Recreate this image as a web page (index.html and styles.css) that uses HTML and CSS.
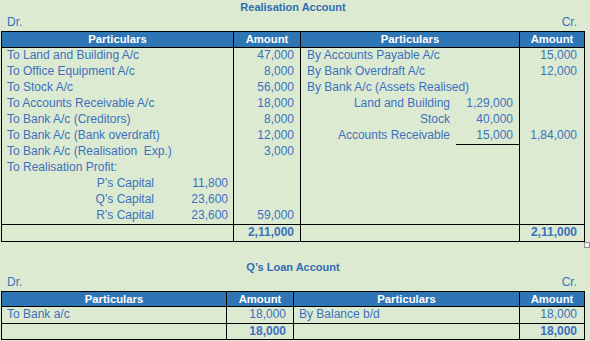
FILE: index.html
```html
<!DOCTYPE html>
<html lang="en">
<head>
<meta charset="utf-8">
<title>Realisation Account</title>
<link rel="stylesheet" href="styles.css">
</head>
<body>
<section class="account">
  <div class="title">Realisation Account</div>
  <div class="drcr"><span>Dr.</span><span>Cr.</span></div>
  <div class="table-wrap">
    <table class="ledger real">
      <thead>
        <tr><th class="c1">Particulars</th><th class="c2">Amount</th><th class="c3">Particulars</th><th class="c4">Amount</th></tr>
      </thead>
      <tbody>
        <tr><td class="txt">To Land and Building A/c</td><td class="num">47,000</td><td class="txt r">By Accounts Payable A/c</td><td class="num r">15,000</td></tr>
        <tr><td class="txt">To Office Equipment A/c</td><td class="num">8,000</td><td class="txt r">By Bank Overdraft A/c</td><td class="num r">12,000</td></tr>
        <tr><td class="txt">To Stock A/c</td><td class="num">56,000</td><td class="txt r">By Bank A/c (Assets Realised)</td><td class="num r"></td></tr>
        <tr><td class="txt">To Accounts Receivable A/c</td><td class="num">18,000</td><td class="split"><div class="sub right"><span class="sub-label">Land and Building</span><span class="sub-amt">1,29,000</span></div></td><td class="num r"></td></tr>
        <tr><td class="txt">To Bank A/c (Creditors)</td><td class="num">8,000</td><td class="split"><div class="sub right"><span class="sub-label">Stock</span><span class="sub-amt">40,000</span></div></td><td class="num r"></td></tr>
        <tr><td class="txt">To Bank A/c (Bank overdraft)</td><td class="num">12,000</td><td class="split"><div class="sub right"><span class="sub-label">Accounts Receivable</span><span class="sub-amt ul">15,000</span></div></td><td class="num r">1,84,000</td></tr>
        <tr><td class="txt">To Bank A/c (Realisation&nbsp; Exp.)</td><td class="num">3,000</td><td class="txt r"></td><td class="num r"></td></tr>
        <tr><td class="txt">To Realisation Profit:</td><td class="num"></td><td class="txt r"></td><td class="num r"></td></tr>
        <tr><td class="split"><div class="sub left"><span class="sub-label">P’s Capital</span><span class="sub-amt">11,800</span></div></td><td class="num"></td><td class="txt r"></td><td class="num r"></td></tr>
        <tr><td class="split"><div class="sub left"><span class="sub-label">Q’s Capital</span><span class="sub-amt">23,600</span></div></td><td class="num"></td><td class="txt r"></td><td class="num r"></td></tr>
        <tr><td class="split"><div class="sub left"><span class="sub-label">R’s Capital</span><span class="sub-amt">23,600</span></div></td><td class="num">59,000</td><td class="txt r"></td><td class="num r"></td></tr>
      </tbody>
      <tfoot>
        <tr class="total"><td></td><td class="num">2,11,000</td><td></td><td class="num r">2,11,000</td></tr>
      </tfoot>
    </table>
    <span class="handle"></span>
  </div>
</section>

<section class="account loan">
  <div class="title">Q’s Loan Account</div>
  <div class="drcr"><span>Dr.</span><span>Cr.</span></div>
  <div class="table-wrap">
    <table class="ledger qloan">
      <thead>
        <tr><th class="q1">Particulars</th><th class="q2">Amount</th><th class="q3">Particulars</th><th class="q4">Amount</th></tr>
      </thead>
      <tbody>
        <tr><td class="txt">To Bank a/c</td><td class="num qn">18,000</td><td class="txt qr">By Balance b/d</td><td class="num r">18,000</td></tr>
      </tbody>
      <tfoot>
        <tr class="total"><td></td><td class="num qn">18,000</td><td></td><td class="num r">18,000</td></tr>
      </tfoot>
    </table>
  </div>
</section>
</body>
</html>
```

FILE: styles.css
```css
html, body {
  margin: 0;
  padding: 0;
  background: #dcead2;
}
body {
  width: 590px;
  height: 341px;
  overflow: hidden;
  font-family: "Liberation Sans", Arial, sans-serif;
  color: #3c70be;
}
.account {
  width: 584px;
  margin-left: 1px;
}
.loan {
  margin-top: 18px;
}
.title {
  text-align: center;
  font-weight: bold;
  font-size: 11px;
  line-height: 14px;
  color: #2f6db3;
}
.drcr {
  display: flex;
  justify-content: space-between;
  font-size: 12px;
  line-height: 17px;
  padding: 0 8px 0 6px;
}
.table-wrap {
  position: relative;
}
.ledger {
  width: 584px;
  table-layout: fixed;
  border-collapse: separate;
  border-spacing: 0;
  border: 1px solid #000;
  font-size: 12px;
}
.ledger th,
.ledger td {
  box-sizing: border-box;
  padding: 0 0 2px;
  line-height: 14px;
  vertical-align: top;
  border-right: 1px solid #000;
  white-space: nowrap;
}
.ledger th:last-child,
.ledger td:last-child {
  border-right: 0;
}
.ledger th {
  background: #2e75b6;
  color: #fff;
  font-weight: bold;
  font-size: 11.3px;
  text-align: center;
  border-bottom: 1px solid #000;
  padding-bottom: 1px;
}
.c1 { width: 232px; }
.c2 { width: 67px; }
.c3 { width: 219px; }
.c4 { width: 64px; }
.q1 { width: 225px; }
.q2 { width: 67px; }
.q3 { width: 226px; }
.q4 { width: 64px; }

.ledger .txt { padding-left: 5px; }
.ledger .txt.r { padding-left: 6px; }
.ledger .txt.qr { padding-left: 5px; }
.ledger .num { text-align: right; padding-right: 6px; }
.ledger .num.r { padding-right: 7px; }
.ledger .num.qn { padding-right: 7px; }

.sub {
  display: flex;
}
.sub-label {
  text-align: right;
}
.sub.left .sub-label { width: 152px; }
.sub.left .sub-amt { flex: 1; text-align: right; padding-right: 5px; }
.sub.right .sub-label { width: 149px; }
.sub.right .sub-amt {
  margin-left: 6px;
  flex: 1;
  text-align: right;
  padding-right: 6px;
}
.sub-amt.ul {
  border-bottom: 1px solid #000;
  padding-bottom: 2px;
  margin-bottom: -3px;
}
.ledger .total td {
  border-top: 1px solid #000;
  font-weight: bold;
}
.qloan .total td {
  padding-bottom: 1px;
}
.qloan th {
  padding-bottom: 0;
}
.handle {
  position: absolute;
  top: 100%;
  right: -5px;
  width: 6px;
  height: 6px;
  box-sizing: border-box;
  border: 1px solid #8c8c8c;
  background: #f4f4f4;
}
```
